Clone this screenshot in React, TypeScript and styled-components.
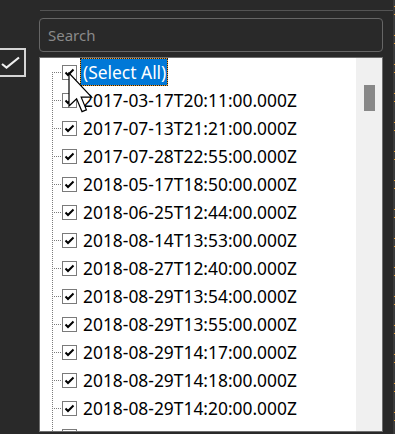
import styled, { createGlobalStyle } from "styled-components";

const GlobalStyle = createGlobalStyle`
   html, body {
      margin: 0;
      padding: 0;
      background: #292929;
   }
   body {
      font-family: "Noto Sans", "Open Sans", sans-serif;
   }
`;

const Page = styled.div`
   position: relative;
   width: 395px;
   height: 434px;
   overflow: hidden;
   display: grid;
   grid-template-columns: 39px 354px 2px;
   background: #292929;
`;

const Side = styled.div`
   padding-top: 48px;
`;

const BigCheck = styled.div`
   margin-left: -12px;
   width: 31px;
   height: 25px;
   border: 2px solid #d4d4d4;
   display: flex;
   align-items: center;
   justify-content: flex-end;
   padding-right: 3px;
`;

const Main = styled.div`
   display: flex;
   flex-direction: column;
`;

const Rule = styled.div`
   margin-top: 10px;
   margin-left: 1px;
   height: 1px;
   background: #545454;
`;

const SearchBox = styled.div`
   margin-top: 7px;
   margin-right: 10px;
   height: 32px;
   border: 1px solid #666;
   border-radius: 4px;
   display: flex;
   align-items: center;
   padding-left: 8px;
   color: #8a8a8a;
   font-size: 15px;
`;

const ListBox = styled.div`
   margin-top: 5px;
   margin-right: 10px;
   height: 373px;
   border: 1px solid #6e6e6e;
   background: #fff;
   display: flex;
   overflow: hidden;
`;

const Rows = styled.div`
   flex: 1;
   overflow: hidden;
   padding-left: 12px;
`;

const Row = styled.div`
   height: 28px;
   display: flex;
   align-items: center;
`;

const Connector = styled.div<{ $first?: boolean }>`
   width: 10px;
   height: 28px;
   flex: none;
   background-image:
      repeating-linear-gradient(to bottom, #7c7c7c 0 1px, transparent 1px 2px),
      repeating-linear-gradient(to right, #7c7c7c 0 1px, transparent 1px 2px);
   background-repeat: no-repeat;
   background-size: 1px ${p => (p.$first ? "14px" : "28px")}, 10px 1px;
   background-position: left bottom, left 14px;
`;

const Box = styled.div`
   width: 13px;
   height: 13px;
   border: 1px solid #7a7a7a;
   flex: none;
   display: flex;
   align-items: center;
   justify-content: center;
`;

const Label = styled.span<{ $active?: boolean }>`
   margin-left: ${p => (p.$active ? "3px" : "6px")};
   padding: ${p => (p.$active ? "0 1px 0 2px" : "0")};
   height: ${p => (p.$active ? "26px" : "auto")};
   display: flex;
   align-items: center;
   font-size: 17.4px;
   white-space: nowrap;
   color: ${p => (p.$active ? "#fff" : "#000")};
   border: ${p => (p.$active ? "1px dotted #1e1e1e" : "none")};
   background: ${p =>
      p.$active
         ? "linear-gradient(#0078d7, #0078d7) padding-box, #f0a030 border-box"
         : "none"};
`;

const Scrollbar = styled.div`
   width: 26px;
   flex: none;
   background: #f0f0f0;
   padding-top: 27px;
   display: flex;
   justify-content: center;
`;

const Thumb = styled.div`
   width: 11px;
   height: 26px;
   background: #888;
`;

const Strip = styled.div`
   background-color: #3a3a3a;
   background-image: repeating-linear-gradient(
      to bottom,
      transparent 0 6px,
      #e89a2c 6px 7px,
      transparent 7px 14px,
      #e89a2c 14px 15px,
      transparent 15px 29px
   );
   background-size: 1px 29px;
   background-position: right top;
   background-repeat: repeat-y;
`;

const Cursor = styled.svg`
   position: absolute;
   left: 68px;
   top: 72px;
   pointer-events: none;
`;

const dates = [
   "2017-03-17T20:11:00.000Z",
   "2017-07-13T21:21:00.000Z",
   "2017-07-28T22:55:00.000Z",
   "2018-05-17T18:50:00.000Z",
   "2018-06-25T12:44:00.000Z",
   "2018-08-14T13:53:00.000Z",
   "2018-08-27T12:40:00.000Z",
   "2018-08-29T13:54:00.000Z",
   "2018-08-29T13:55:00.000Z",
   "2018-08-29T14:17:00.000Z",
   "2018-08-29T14:18:00.000Z",
   "2018-08-29T14:20:00.000Z",
];

function Tick() {
   return (
      <svg width="13" height="13" viewBox="0 0 13 13">
         <path d="M2.5 6.5 L5 9 L10.5 3.5" fill="none" stroke="#000" strokeWidth="2" />
      </svg>
   );
}

function App() {
   return (
      <Page>
         <GlobalStyle />
         <Side>
            <BigCheck>
               <svg width="20" height="14" viewBox="0 0 20 14">
                  <path d="M1 8 L5.5 11.5 L18 1.5" fill="none" stroke="#eee" strokeWidth="2.2" />
               </svg>
            </BigCheck>
         </Side>
         <Main>
            <Rule />
            <SearchBox>Search</SearchBox>
            <ListBox>
               <Rows>
                  <Row>
                     <Connector $first />
                     <Box><Tick /></Box>
                     <Label $active>(Select All)</Label>
                  </Row>
                  {dates.map(d => (
                     <Row key={d}>
                        <Connector />
                        <Box><Tick /></Box>
                        <Label>{d}</Label>
                     </Row>
                  ))}
                  {/* next row, scrolled below the edge */}
                  <Row>
                     <Connector />
                     <Box><Tick /></Box>
                  </Row>
               </Rows>
               <Scrollbar>
                  <Thumb />
               </Scrollbar>
            </ListBox>
         </Main>
         <Strip />
         <Cursor width="26" height="42" viewBox="0 0 13 21">
            <path
               d="M0.5 0.5 L0.5 17 L4.3 13.4 L7 19.8 L9.2 18.9 L6.6 12.6 L11.8 12.6 Z"
               fill="#fff"
               stroke="#000"
               strokeWidth="0.6"
               strokeLinejoin="miter"
            />
         </Cursor>
      </Page>
   );
}

export default App;
